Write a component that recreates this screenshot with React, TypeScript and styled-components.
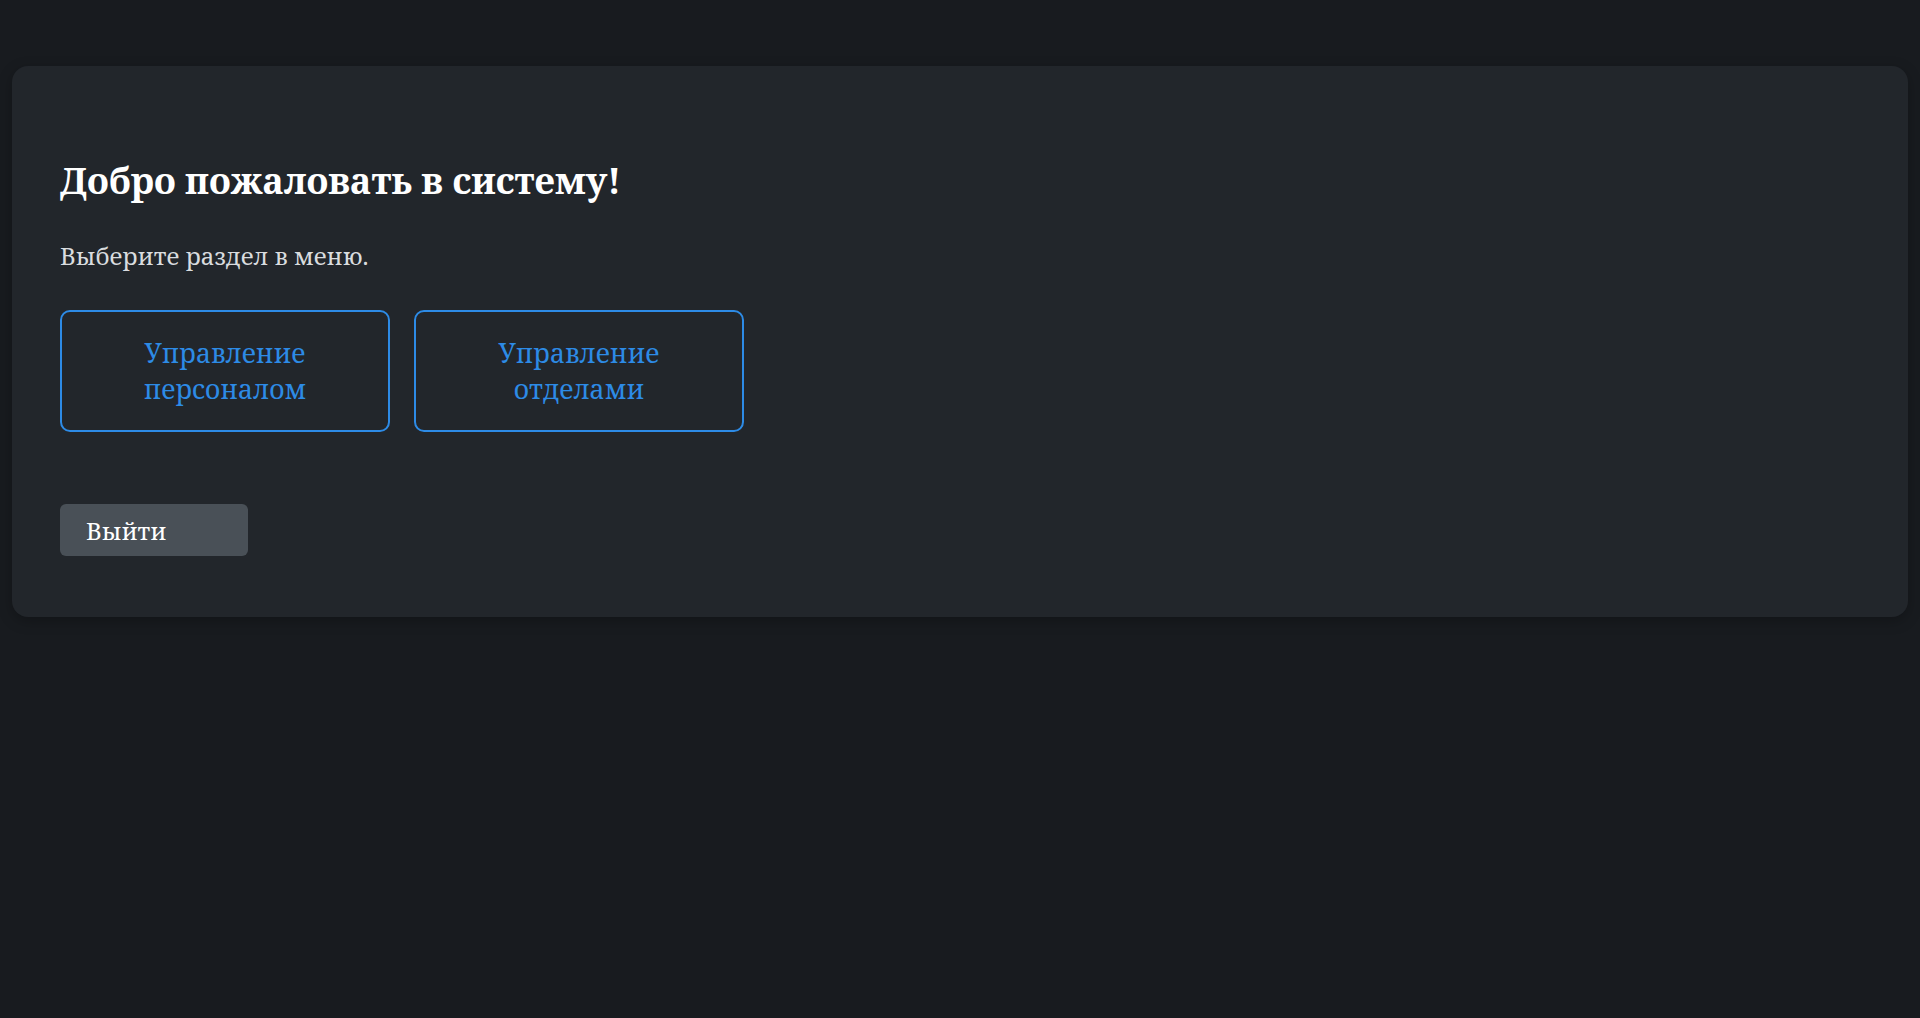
import styled, { createGlobalStyle } from "styled-components";

const GlobalStyle = createGlobalStyle`
  html, body {
    margin: 0;
    padding: 0;
    background: #181b1f;
  }

  body {
    font-family: "Noto Serif", "DejaVu Serif", serif;
    font-size: 24px;
    color: #f1f3f5;
  }
`;

const sections = [
  { id: "staff", title: "Управление персоналом" },
  { id: "departments", title: "Управление отделами" },
];

const App = () => {
  return (
    <>
      <GlobalStyle />
      <Page>
        <Card>
          <Title>Добро пожаловать в систему!</Title>
          <Subtitle>Выберите раздел в меню.</Subtitle>
          <SectionList>
            {sections.map((item) => (
              <SectionButton key={item.id}>{item.title}</SectionButton>
            ))}
          </SectionList>
          <LogoutButton>Выйти</LogoutButton>
        </Card>
      </Page>
    </>
  );
};

export default App;

const Page = styled.div`
  min-height: 1018px;
  padding: 66px 12px 0;
  box-sizing: border-box;
`;

const Card = styled.div`
  background: #22262b;
  border-radius: 16px;
  box-shadow: 0 4px 14px rgba(0, 0, 0, 0.25);
  padding: 93px 48px 61px;
  display: flex;
  flex-direction: column;
  align-items: flex-start;
`;

const Title = styled.h1`
  margin: 0;
  font-size: 36px;
  line-height: 1.2;
  font-weight: 700;
  color: #ffffff;
`;

const Subtitle = styled.p`
  margin: 36px 0 0;
  font-size: 24px;
  line-height: 1.5;
  color: #d9dcdf;
`;

const SectionList = styled.div`
  display: flex;
  gap: 24px;
  margin-top: 36px;
`;

const SectionButton = styled.button`
  width: 330px;
  padding: 23px 48px;
  box-sizing: border-box;
  background: transparent;
  border: 2px solid #2d8be6;
  border-radius: 10px;
  color: #2d8be6;
  font-family: inherit;
  font-size: 26.4px;
  line-height: 36px;
  text-align: center;
  cursor: pointer;
`;

const LogoutButton = styled.button`
  margin-top: 72px;
  width: 188px;
  height: 52px;
  padding: 0 26px;
  box-sizing: border-box;
  background: #495057;
  border: none;
  border-radius: 6px;
  color: #ffffff;
  font-family: inherit;
  font-size: 24px;
  text-align: left;
  cursor: pointer;
`;
